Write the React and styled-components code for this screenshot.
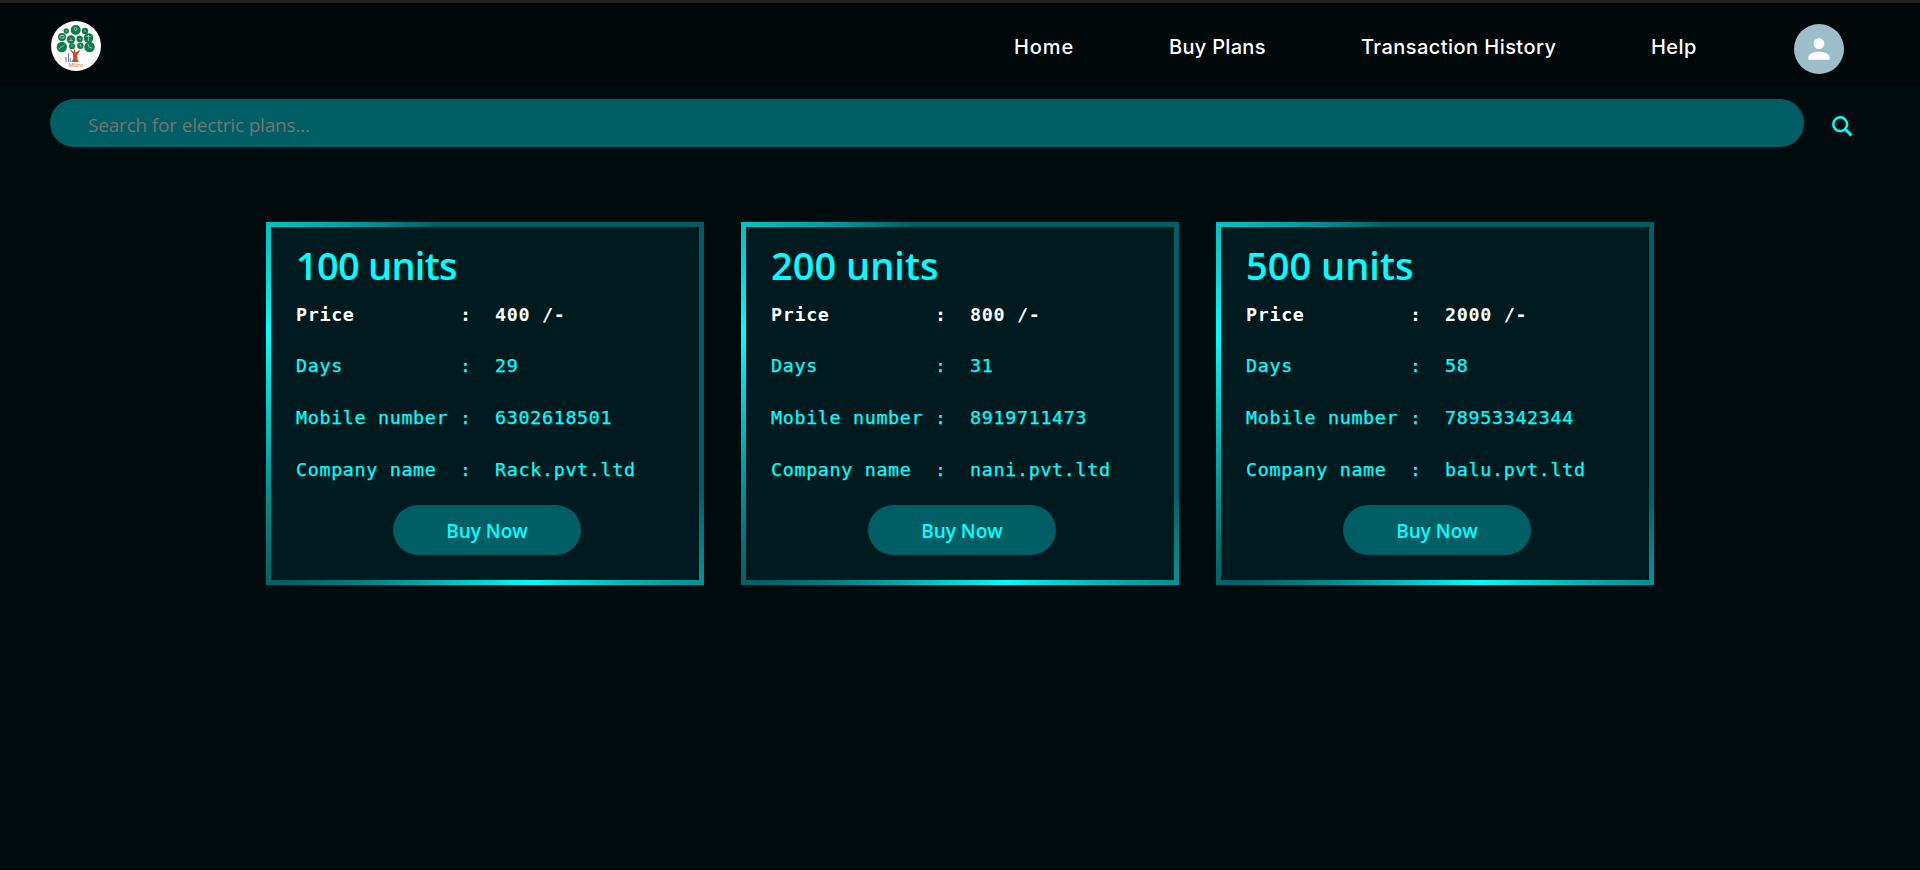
import React from "react";
import styled, { createGlobalStyle } from "styled-components";
import { MdPerson } from "react-icons/md";

const Global = createGlobalStyle`
  * { box-sizing: border-box; }
  body { margin: 0; background: #000c0d; overflow: hidden; }
  h2, p { margin: 0; }
`;

const Page = styled.div`
  height: 870px;
  display: flex;
  flex-direction: column;
  border-top: 3px solid #202020;
  border-bottom: 1px solid #000;
  background: #000c0d;
  font-family: "Open Sans", "Noto Sans", sans-serif;
`;

const Navbar = styled.header`
  height: 83px;
  flex: none;
  display: flex;
  align-items: flex-start;
  justify-content: space-between;
  padding: 0 76px 0 51px;
  background: #000809;
`;

const Logo = styled.svg`
  width: 50px;
  height: 50px;
  margin-top: 18px;
`;

const Nav = styled.nav`
  display: flex;
  align-items: flex-start;
`;

const NavLink = styled.a`
  width: ${(p) => p.$width}px;
  margin: 30px 95px 0 0;
  color: #fff;
  font: 500 20px/28px Inter, sans-serif;
  letter-spacing: ${(p) => p.$tracking}px;
  white-space: nowrap;
`;

const Avatar = styled.div`
  width: 50px;
  height: 50px;
  margin-top: 21px;
  display: flex;
  align-items: center;
  justify-content: center;
  border-radius: 50%;
  background: #9dbec9;
  color: #fff;
  font-size: 32px;
`;

const SearchRow = styled.div`
  display: flex;
  align-items: center;
  padding: 13px 0 0 50px;
`;

const SearchInput = styled.input`
  width: 1754px;
  height: 48px;
  padding: 4px 38px 0;
  border: 0;
  border-radius: 24px;
  outline: 0;
  background: #005f64;
  color: #0ff;
  font: 400 19px "Open Sans", sans-serif;
  letter-spacing: -0.18px;
  &::placeholder { color: #757575; opacity: 1; }
`;

const SearchButton = styled.button`
  display: flex;
  margin: 7px 0 0 28px;
  padding: 0;
  border: 0;
  background: none;
  color: #0ff;
`;

const Plans = styled.main`
  display: flex;
  justify-content: center;
  gap: 37px;
  padding-top: 75px;
`;

const Card = styled.article`
  width: 438px;
  height: 363px;
  display: flex;
  flex-direction: column;
  padding: 12px 25px 0;
  border: 5px solid;
  border-image: conic-gradient(from 48.5deg, #005f64 0deg 64deg, #0ff 117deg, #005f64 180deg, #0ff 240deg, #005f64 296deg 360deg) 1;
  border-radius: 24px;
  background: #001b1f;
`;

const Title = styled.h2`
  color: #0ff;
  font-size: 38px;
  font-weight: 600;
  line-height: 52px;
  letter-spacing: ${(p) => p.$tracking}px;
`;

const Rows = styled.div`
  margin-top: -2.5px;
`;

const Row = styled.p`
  color: ${(p) => (p.$strong ? "#fff" : "#0ff")};
  font-family: "DejaVu Sans Mono", monospace;
  font-size: 18.4px;
  font-weight: ${(p) => (p.$strong ? 700 : 400)};
  line-height: 51.67px;
  letter-spacing: 0.64px;
  white-space: pre;
  -webkit-text-stroke: ${(p) => (p.$strong ? 0 : 0.25)}px currentColor;
`;

const BuyButton = styled.button`
  width: 188px;
  height: 50px;
  margin: 9.5px 0 0 97px;
  padding: 2px 0 0;
  border: 0;
  border-radius: 25px;
  background: #005f64;
  color: #0ff;
  font: 600 19px "Open Sans", sans-serif;
`;

const plans = [
  { units: 100, tracking: -0.75, price: "400", days: "29", mobile: "6302618501", company: "Rack.pvt.ltd" },
  { units: 200, tracking: 0, price: "800", days: "31", mobile: "8919711473", company: "nani.pvt.ltd" },
  { units: 500, tracking: 0, price: "2000", days: "58", mobile: "78953342344", company: "balu.pvt.ltd" },
];

const links = [
  { label: "Home", width: 60, tracking: 0.9 },
  { label: "Buy Plans", width: 97, tracking: 0.3 },
  { label: "Transaction History", width: 195, tracking: 0.45 },
  { label: "Help", width: 48, tracking: 0.4 },
];

const leaves = [
  [15.3, 10, 2.7], [24.7, 9, 5], [34, 10, 3.2], [11, 16, 4], [20, 18.5, 4.2],
  [28.7, 18, 3.2], [37.5, 17, 4.8], [10.8, 26, 5.2], [21, 25.3, 3], [29.4, 24.8, 3.2], [38.5, 26, 5.3],
];

function TreeLogo() {
  return (
    <Logo viewBox="0 0 50 50">
      <circle cx="25" cy="25" r="25" fill="#fff" />
      {leaves.map(([x, y, r]) => (
        <circle key={x} cx={x} cy={y} r={r} fill="#107a50" />
      ))}
      <g fill="none" stroke="#a9d2bf" strokeWidth="0.8">
        <path d="M9 14.500h4v2.500h-4zM18 19.500h4M20 17v2M37.500 14v6M35.500 15.500h4M7.500 28l6-4M37 23l1 3 3 1M29 23l1 3M20 25h2M14.500 10h2M33.500 9l1 2M28 18h2" />
        <circle cx="24.700" cy="8" r="1.500" />
      </g>
      <path d="M20.300 41l1.900-3-.2-5-4-5.500 4.800 3.500L23.300 27l1.400 4.500 5-3-3.400 5.500.1 4 1.400 3z" fill="#c5502c" />
      <path d="M15 41v-5M17.500 41v-9M19.300 41v-4" stroke="#77819b" strokeWidth="1.100" />
      <text x="25" y="45.800" textAnchor="middle" fontFamily="Liberation Sans, sans-serif" fontSize="5" textLength="15" lengthAdjust="spacingAndGlyphs" fill="#d06b4c">Micro</text>
    </Logo>
  );
}

function SearchIcon() {
  return (
    <svg width="21" height="21" viewBox="0 0 21 21" fill="none" stroke="currentColor">
      <circle cx="8.200" cy="8.200" r="6.900" strokeWidth="2.500" />
      <path d="M12.800 12.800L19.400 19.400" strokeWidth="2.900" />
    </svg>
  );
}

function PlanCard({ plan }) {
  return (
    <Card>
      <Title $tracking={plan.tracking}>{plan.units} units</Title>
      <Rows>
        <Row $strong>{`Price         :  ${plan.price} /-`}</Row>
        <Row>{`Days          :  ${plan.days}`}</Row>
        <Row>{`Mobile number :  ${plan.mobile}`}</Row>
        <Row>{`Company name  :  ${plan.company}`}</Row>
      </Rows>
      <BuyButton>Buy Now</BuyButton>
    </Card>
  );
}

export default function App() {
  return (
    <Page>
      <Global />
      <Navbar>
        <TreeLogo />
        <Nav>
          {links.map((l) => (
            <NavLink key={l.label} $width={l.width} $tracking={l.tracking}>{l.label}</NavLink>
          ))}
          <Avatar><MdPerson /></Avatar>
        </Nav>
      </Navbar>
      <SearchRow>
        <SearchInput placeholder="Search for electric plans..." />
        <SearchButton aria-label="Search"><SearchIcon /></SearchButton>
      </SearchRow>
      <Plans>
        {plans.map((p) => <PlanCard key={p.units} plan={p} />)}
      </Plans>
    </Page>
  );
}
